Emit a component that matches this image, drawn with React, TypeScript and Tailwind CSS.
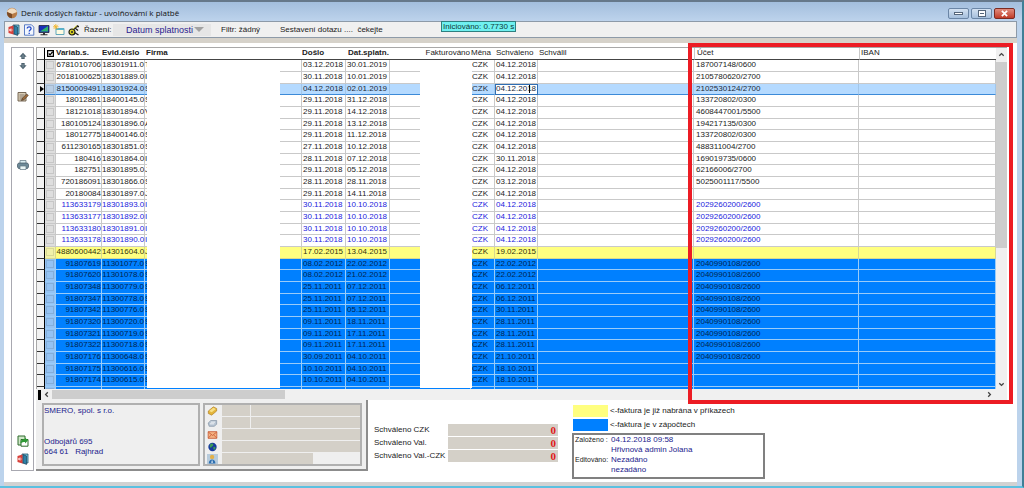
import type { ReactNode } from "react";

type Kind = "plain" | "selected" | "link" | "yellow" | "blue";
type Row = [string, string, string, string, string, string, string, Kind];

const rows: Row[] = [
  ["6781010706", "18301911.0", "T", "03.12.2018", "30.01.2019", "04.12.2018", "187007148/0600", "plain"],
  ["2018100625", "18301889.0", "I", "30.11.2018", "10.01.2019", "04.12.2018", "2105780620/2700", "plain"],
  ["8150009491", "18301924.0", "S", "04.12.2018", "02.01.2019", "04.12.2018", "2102530124/2700", "selected"],
  ["18012861", "18400145.0", "S", "29.11.2018", "31.12.2018", "04.12.2018", "133720802/0300", "plain"],
  ["18121018", "18301894.0", "V", "29.11.2018", "14.12.2018", "04.12.2018", "4608447001/5500", "plain"],
  ["180105124", "18301896.0", "A", "29.11.2018", "13.12.2018", "04.12.2018", "194217135/0300", "plain"],
  ["18012775", "18400146.0", "S", "29.11.2018", "11.12.2018", "04.12.2018", "133720802/0300", "plain"],
  ["611230165", "18301851.0", "S", "27.11.2018", "10.12.2018", "04.12.2018", "488311004/2700", "plain"],
  ["180416", "18301864.0", "I", "28.11.2018", "07.12.2018", "30.11.2018", "169019735/0600", "plain"],
  ["182751", "18301895.0", "J", "29.11.2018", "05.12.2018", "04.12.2018", "62166006/2700", "plain"],
  ["720186091", "18301866.0", "S", "28.11.2018", "28.11.2018", "03.12.2018", "5025001117/5500", "plain"],
  ["20180084", "18301897.0", "J", "29.11.2018", "14.11.2018", "04.12.2018", "", "plain"],
  ["113633179", "18301893.0", "I", "30.11.2018", "10.10.2018", "04.12.2018", "2029260200/2600", "link"],
  ["113633177", "18301892.0", "I", "30.11.2018", "10.10.2018", "04.12.2018", "2029260200/2600", "link"],
  ["113633180", "18301891.0", "I", "30.11.2018", "10.10.2018", "04.12.2018", "2029260200/2600", "link"],
  ["113633178", "18301890.0", "I", "30.11.2018", "10.10.2018", "04.12.2018", "2029260200/2600", "link"],
  ["4880600442", "14301604.0", "J", "17.02.2015", "13.04.2015", "19.02.2015", "", "yellow"],
  ["91807619", "11301077.0", "S", "08.02.2012", "22.02.2012", "22.02.2012", "2040990108/2600", "blue"],
  ["91807620", "11301078.0", "S", "08.02.2012", "21.02.2012", "22.02.2012", "2040990108/2600", "blue"],
  ["91807348", "11300779.0", "S", "25.11.2011", "07.12.2011", "06.12.2011", "2040990108/2600", "blue"],
  ["91807347", "11300778.0", "S", "25.11.2011", "07.12.2011", "06.12.2011", "2040990108/2600", "blue"],
  ["91807342", "11300776.0", "S", "25.11.2011", "05.12.2011", "30.11.2011", "2040990108/2600", "blue"],
  ["91807320", "11300720.0", "S", "09.11.2011", "18.11.2011", "28.11.2011", "2040990108/2600", "blue"],
  ["91807321", "11300719.0", "S", "09.11.2011", "17.11.2011", "28.11.2011", "2040990108/2600", "blue"],
  ["91807322", "11300718.0", "S", "09.11.2011", "17.11.2011", "28.11.2011", "2040990108/2600", "blue"],
  ["91807176", "11300648.0", "S", "30.09.2011", "04.10.2011", "21.10.2011", "2040990108/2600", "blue"],
  ["91807175", "11300616.0", "S", "10.10.2011", "04.10.2011", "18.10.2011", "", "blue"],
  ["91807174", "11300615.0", "S", "10.10.2011", "04.10.2011", "18.10.2011", "", "blue"],
];

const tone: Record<Kind, string> = {
  plain: "bg-white text-[#222] *:border-[#c9c9c9]",
  link: "bg-white text-[#2222dd] *:border-[#c9c9c9]",
  selected: "bg-[#b5daff] text-[#1a2a3a] *:border-r-[#a3c6e8] *:border-b-[#3c8ad8]",
  yellow: "bg-[#ffff80] text-[#333310] *:border-[#d8d890]",
  blue: "bg-[#0080ff] text-[#002550] *:border-[#9accf8]",
};

const checkTone: Record<Kind, string> = {
  plain: "bg-[#dedede]",
  link: "bg-[#dedede]",
  selected: "bg-[#b9cfe6]",
  yellow: "bg-[#f1f1a8]",
  blue: "bg-[#94c2f2]",
};

const Svg = ({ children, className = "size-[12px]" }: { children: ReactNode; className?: string }) => (
  <svg viewBox="0 0 12 12" className={`block shrink-0 ${className}`} aria-hidden="true">
    {children}
  </svg>
);

const DoorIcon = () => (
  <Svg>
    <path d="M5 1h6v9H5z" fill="#6fc3dc" stroke="#23506b" strokeWidth="0.8" />
    <path d="M6 1.5 9.500 3v8.500L6 10z" fill="#2d7fa6" stroke="#17384d" strokeWidth="0.6" />
    <path d="M.500 3 5.500 1.500v9L.500 9z" fill="#d8403a" />
    <path d="M1.500 6h3M3 4.500 1.500 6 3 7.500" stroke="#fff" strokeWidth="0.9" fill="none" />
  </Svg>
);

const HelpIcon = () => (
  <Svg>
    <path d="M1.5.8h7l2.3 2.3v8.1H1.5z" fill="#f2f7ff" stroke="#4a6fc0" strokeWidth="0.9" />
    <path d="M4.2 4.6c0-2.3 3.9-2.2 3.9 0C8.100 6 6.200 6 6.200 7.500M6.200 8.700v1.200" stroke="#2348c8" strokeWidth="1.300" fill="none" />
  </Svg>
);

const MonitorIcon = () => (
  <Svg>
    <path d="M1 1.500h10v7H1z" fill="#1a2fb8" stroke="#20243c" strokeWidth="0.800" />
    <path d="M2 7.500 10 2v5.500z" fill="#2fb36b" />
    <path d="M5 9h2v1.200h2.500v1H2.500v-1H5z" fill="#333" />
  </Svg>
);

const NewIcon = () => (
  <Svg>
    <path d="M3 4.500h8v6H3z" fill="#fffbe2" stroke="#4f9fb6" strokeWidth="0.900" />
    <path d="M3 4.500h8V6H3z" fill="#58b5cf" />
    <path d="M2.800 0v5.600M0 2.800h5.600M.8.800l4 4M4.800.800l-4 4" stroke="#f0b62c" strokeWidth="0.900" />
  </Svg>
);

const KeyIcon = () => (
  <Svg>
    <circle cx="4" cy="8" r="3" fill="#d8d020" stroke="#1c1c10" strokeWidth="1.200" />
    <circle cx="4" cy="8" r="1" fill="#222" />
    <path d="M5 6 10 1.500M7 4l3 2.500M8.500 2.500H11M6.500 8.500l4 2.500" stroke="#222" strokeWidth="1.300" />
    <path d="M5 5 9 1.500" stroke="#e4da30" strokeWidth="0.900" />
  </Svg>
);

const AppIcon = () => (
  <Svg>
    <circle cx="6" cy="6" r="5.200" fill="#b77b46" />
    <path d="M1 5c2-5 8-5 10 0L6 7z" fill="#f1dcc0" />
    <path d="M6 7v4.200C2.500 11 1 8.500 1 5z" fill="#7a4a26" />
  </Svg>
);

const EditIcon = () => (
  <Svg>
    <path d="M1 1.500h8v8.500H1z" fill="#d9cdb6" stroke="#6b5b48" strokeWidth="0.900" />
    <path d="M2.500 4h5M2.500 6h4M2.500 8h3" stroke="#76685a" strokeWidth="0.800" />
    <path d="m4.500 9.500 1-2.500L9.800 3l1.500 1.500L7 8.700z" fill="#a06d3c" stroke="#3b2c20" strokeWidth="0.600" />
  </Svg>
);

const PrinterIcon = () => (
  <Svg>
    <path d="M3 1.500h6v3H3z" fill="#dbeef2" stroke="#5d7380" strokeWidth="0.700" />
    <path d="M1.500 4h9l1 1.500V8l-1 1.500h-9l-1-1.500V5.500z" fill="#6d8a98" stroke="#3f5561" strokeWidth="0.700" />
    <path d="M3 7h6v3.500H3z" fill="#e9f5f5" stroke="#5d7380" strokeWidth="0.700" />
  </Svg>
);

const ExportIcon = () => (
  <Svg>
    <path d="M1 1h7v9H1z" fill="#cfe8c8" stroke="#2e6a2c" strokeWidth="1" />
    <path d="M4 4.500h7v6.700H4z" fill="#fff" stroke="#2e6a2c" strokeWidth="1" />
    <path d="M3.500 8.500c0-3.500 2-4.500 4.500-4.500V2.500l3 3L8 8.500V7c-1.500 0-3 .2-4.500 1.500z" fill="#2f9a35" />
  </Svg>
);

const RailArrow = ({ down = false }: { down?: boolean }) => (
  <Svg className={down ? "size-[8px] rotate-180" : "size-[8px]"}>
    <path d="M6 1 11.500 7H8.500v3.500h-5V7H.500z" fill="#4e6370" />
    <path d="M6 4v5" stroke="#9db2bd" strokeWidth="1" />
  </Svg>
);

const PhoneIcon = () => (
  <Svg className="w-[11px] h-[10px]">
    <path d="M1 6 7 1l4 2v3L5 11 1 9z" fill="#e3b53a" stroke="#a8761a" strokeWidth="0.700" />
    <path d="m2 6 5-4 3 1.500L5 7.500z" fill="#f8df86" />
  </Svg>
);

const FaxIcon = () => (
  <Svg className="w-[11px] h-[10px]">
    <path d="M.8 6 4 3h7v4.500L8 10H2z" fill="#b7c4d2" stroke="#74879a" strokeWidth="0.700" />
    <path d="M4 5h5M3 7h5" stroke="#fff" strokeWidth="0.900" />
  </Svg>
);

const MailIcon = () => (
  <Svg className="w-[11px] h-[10px]">
    <path d="M.8 2h10.400v8H.8z" fill="#f4b183" stroke="#c2512a" strokeWidth="0.900" />
    <path d="m1 2.500 5 4 5-4M1 9.500 4.500 6M11 9.500 7.500 6" stroke="#c2512a" strokeWidth="0.900" fill="none" />
  </Svg>
);

const GlobeIcon = () => (
  <Svg className="w-[11px] h-[10px]">
    <circle cx="6" cy="6" r="5" fill="#173a9e" />
    <path d="M3 3c2-2 4-1 4 .5S5 5 4.500 6.500 2 6 3 3zM7 6c2-1 3 .5 2.500 2S7 9.500 7 8z" fill="#3c9a58" />
  </Svg>
);

const PersonIcon = () => (
  <Svg className="w-[11px] h-[10px] bg-[#b7cbdc]">
    <circle cx="5.500" cy="3.500" r="2.600" fill="#e2b04a" />
    <path d="M1.500 11.500c0-6.500 8-6.500 8 0z" fill="#2d6fb0" />
    <path d="m5.500 7 1 3.500h-2z" fill="#fff" />
  </Svg>
);

const Chevron = ({ className }: { className: string }) => (
  <svg viewBox="0 0 8 8" className={`size-[7px] ${className}`} aria-hidden="true">
    <path d="M1.500 5.500 4 3l2.500 2.500" stroke="#444" strokeWidth="1.500" fill="none" />
  </svg>
);

const InvoiceRow = ({ row }: { row: Row }) => {
  const [variab, evid, firma, doslo, splatn, schvaleno, ucet, kind] = row;
  const selected = kind === "selected";

  return (
    <tr className={`h-[12px] nth-[3n]:h-[11px] *:border-b *:border-r *:align-top *:whitespace-nowrap ${tone[kind]}`}>
      <td className="bg-[#f2f2f2] border-r-black! border-b-[#333]!">
        {selected && (
          <svg viewBox="0 0 4 6" className="mt-[2px] ml-auto h-[6px] w-[4px]" aria-hidden="true">
            <path d="M0 0l4 3-4 3z" fill="#000" />
          </svg>
        )}
      </td>
      <td className={checkTone[kind]}>
        <input type="checkbox" aria-label={variab} className="mx-auto mt-px block size-[8px] appearance-none border border-black/10" />
      </td>
      <td className="text-right">{variab}</td>
      <td className="text-right">{evid}</td>
      <td>{firma}</td>
      <td className="pl-px">{doslo}</td>
      <td className="pl-px">{splatn}</td>
      <td></td>
      <td className="pl-px">CZK</td>
      <td className={selected ? "relative bg-white outline -outline-offset-1 outline-[#2f6fb4]" : "pl-px"}>
        {selected ? (
          <>
            <input aria-label="Schváleno" defaultValue={schvaleno} className="block h-[10px] w-full bg-transparent pl-px outline-none" />
            <span className="absolute top-px left-[34px] h-[8px] w-px bg-black"></span>
          </>
        ) : (
          schvaleno
        )}
      </td>
      <td></td>
      <td className="pl-[2px]">{ucet}</td>
      <td></td>
    </tr>
  );
};

const contacts = [
  { icon: <PhoneIcon />, label: "Telefon", split: true },
  { icon: <FaxIcon />, label: "Fax", split: true },
  { icon: <MailIcon />, label: "E-mail", split: false },
  { icon: <GlobeIcon />, label: "Web", split: false },
  { icon: <PersonIcon />, label: "Kontakt", split: false },
];

const App = () => {
  return (
    <div className="relative flex flex-col border-t-2 border-b-2 border-r-2 border-t-[#66788a] border-r-[#3f7f96] border-b-[#5cc0e0] bg-[#bcd3ec] pl-1 pr-[5px] font-['Liberation_Sans',sans-serif] text-[8px] leading-[10px] text-[#222]">
      {/* Title bar */}
      <header className="-ml-1 -mr-[5px] flex h-[19px] items-center bg-linear-to-b from-[#a3bedd] to-[#bdd3ec] pl-[6px] pr-[7px] pt-[3px]">
        <AppIcon />
        <h1 className="ml-[3px] flex-1 font-['Open_Sans',sans-serif] text-[8px] text-[#111]">Deník došlých faktur - uvolňovámí k platbě</h1>
        <div className="flex gap-[2px]">
          <button aria-label="Minimalizovat" className="flex h-[11px] w-[21px] items-center justify-center rounded-[2px] border border-[#6b86a6] bg-linear-to-b from-[#d3e1f1] to-[#a5bfdc]">
            <span className="h-[3px] w-[9px] border border-[#55667a] bg-white"></span>
          </button>
          <button aria-label="Maximalizovat" className="flex h-[11px] w-[21px] items-center justify-center rounded-[2px] border border-[#6b86a6] bg-linear-to-b from-[#d3e1f1] to-[#a5bfdc]">
            <span className="flex h-[7px] w-[8px] items-center justify-center border border-[#55667a] bg-white">
              <span className="h-px w-[4px] bg-[#55667a]"></span>
            </span>
          </button>
          <button aria-label="Zavřít" className="flex h-[11px] w-[21px] items-center justify-center rounded-[2px] border border-[#7c2b22] bg-linear-to-b from-[#e08a7c] to-[#c03a26]">
            <svg viewBox="0 0 8 8" className="size-[7px]" aria-hidden="true">
              <path d="m1 1 6 6M7 1 1 7" stroke="#fff" strokeWidth="2" />
            </svg>
          </button>
        </div>
      </header>

      {/* Toolbar */}
      <div className="flex h-[17px] items-center border border-[#8d9aa8] bg-[#f0f0f0] pl-[3px]">
        <div className="flex gap-[3px]">
          <button aria-label="Konec"><DoorIcon /></button>
          <button aria-label="Nápověda"><HelpIcon /></button>
          <button aria-label="Obrazovka"><MonitorIcon /></button>
          <button aria-label="Nový"><NewIcon /></button>
          <button aria-label="Klíč"><KeyIcon /></button>
        </div>
        <label htmlFor="sort" className="ml-1 w-[29px]">Řazení:</label>
        <div className="relative h-[12px] w-[98px] bg-[#e6e6e6] text-[#2a1a90]">
          <select id="sort" className="block h-full w-full appearance-none pl-[13px] text-[9px] leading-[12px]">
            <option>Datum splatnosti</option>
          </select>
          <svg viewBox="0 0 10 5" className="pointer-events-none absolute top-[3px] right-[7px] h-[5px] w-[10px]" aria-hidden="true">
            <path d="M0 0h10L5 5z" fill="#a2a2a2" />
          </svg>
        </div>
        <span className="ml-[10px] w-[59px]">Filtr: žádný</span>
        <span>Sestavení dotazu .... &nbsp;čekejte</span>
      </div>
      <div className="absolute top-[19px] left-[441px] border border-[#2f8080] bg-[#6ff0f0] px-px leading-[9px] text-[#103838]">Iniciováno: 0.7730 s</div>

      <div className="h-[5px] bg-[#d6d2ca]"></div>

      <main className="flex border-b-4 border-[#d2d2d2] bg-white pt-1 pr-[10px] pb-[3px] pl-[7px]">
        {/* Left rail */}
        <nav className="mr-[2px] mb-2 flex w-[23px] shrink-0 flex-col items-center border border-[#a8a8b0] pt-1 pb-[5px]">
          <button aria-label="Předchozí"><RailArrow /></button>
          <button aria-label="Další" className="mt-[2px]"><RailArrow down /></button>
          <button aria-label="Upravit" className="mt-[21px]"><EditIcon /></button>
          <button aria-label="Tisk" className="mt-[56px]"><PrinterIcon /></button>
          <button aria-label="Export" className="mt-auto"><ExportIcon /></button>
          <button aria-label="Zavřít okno" className="mt-[6px]"><DoorIcon /></button>
        </nav>

        <div className="min-w-0 flex-1">
          {/* Invoice grid */}
          <div className="flex border-t border-l border-[#a8a8a8]">
            <div className="relative h-[341px] min-w-0 flex-1 overflow-hidden">
              <table className="w-full table-fixed border-separate border-spacing-0">
                <colgroup>
                  <col className="w-[8px]" />
                  <col className="w-[11px]" />
                  <col className="w-[46px]" />
                  <col className="w-[43px]" />
                  <col className="w-[157px]" />
                  <col className="w-[44px]" />
                  <col className="w-[44px]" />
                  <col className="w-[81px]" />
                  <col className="w-[24px]" />
                  <col className="w-[43px]" />
                  <col className="w-[156px]" />
                  <col className="w-[165px]" />
                  <col />
                </colgroup>
                <thead>
                  <tr className="h-[12px] text-left *:border-b *:border-b-[#444] *:align-top *:font-normal *:whitespace-nowrap">
                    <th className="border-r border-r-black"></th>
                    <th>
                      <svg viewBox="0 0 8 8" className="mt-[2px] ml-[2px] size-[7px]" aria-hidden="true">
                        <path d="M.7.700h6.600v6.600H.7z" fill="#fff" stroke="#000" strokeWidth="1.400" />
                        <path d="m2 4 1.500 1.500L6.500 2" stroke="#000" strokeWidth="1.400" fill="none" />
                      </svg>
                    </th>
                    <th className="font-bold!">Variab.s.</th>
                    <th className="font-bold!">Evid.číslo</th>
                    <th className="pl-px font-bold!">Firma</th>
                    <th className="font-bold!">Došlo</th>
                    <th className="pl-[2px] font-bold!">Dat.splatn.</th>
                    <th className="pr-px text-right">Fakturováno</th>
                    <th>Měna</th>
                    <th className="pl-px">Schváleno</th>
                    <th className="pl-px">Schválil</th>
                    <th className="border-l border-l-[#c9c9c9] pl-[2px]">Účet</th>
                    <th className="border-l border-l-[#c9c9c9] pl-px">IBAN</th>
                  </tr>
                </thead>
                <tbody>
                  {rows.map((row) => (
                    <InvoiceRow key={row[0]} row={row} />
                  ))}
                  <InvoiceRow row={["91807173", "11300614.0", "S", "10.10.2011", "04.10.2011", "18.10.2011", "", "blue"]} />
                </tbody>
              </table>
              {/* blanked-out columns */}
              <div className="absolute top-[12px] bottom-px left-[110px] w-[133px] bg-white"></div>
              <div className="absolute top-[12px] bottom-px left-[383px] w-[52px] bg-white"></div>
            </div>
            {/* vertical scrollbar */}
            <div className="flex w-[11px] flex-col items-center bg-[#f0f0f0]">
              <Chevron className="mt-[3px]" />
              <div className="mt-1 h-[186px] w-full bg-[#cdcdcd]"></div>
              <Chevron className="mt-auto mb-px rotate-180" />
            </div>
          </div>
          {/* horizontal scrollbar */}
          <div className="flex h-[11px] items-center bg-[#f0f0f0] pl-[2px]">
            <span className="h-[10px] w-[3px] bg-black"></span>
            <Chevron className="ml-[2px] -rotate-90" />
            <div className="ml-[2px] h-[9px] w-[233px] bg-[#cdcdcd]"></div>
            <Chevron className="mr-[14px] ml-auto rotate-90" />
          </div>

          {/* Footer */}
          <div className="flex items-start">
            <div className="flex h-[71px] gap-[3px] border-r-2 border-b-2 border-[#8c8c8c] bg-[#efefef] pt-[3px] pr-1 pb-[3px] pl-[6px]">
              <address className="w-[158px] border-2 border-[#b0b0b0] pt-px text-[#22228c] not-italic">
                <p>SMERO, spol. s r.o.</p>
                <p className="mt-[21px]">Odbojářů 695</p>
                <p>664 61&nbsp;&nbsp; Rajhrad</p>
              </address>
              <div className="flex w-[159px] flex-col justify-center gap-[2px] border-2 border-[#b0b0b0] pl-[2px]">
                {contacts.map((c) => (
                  <div key={c.label} className="flex h-[10px] items-center">
                    {c.icon}
                    <div className={`ml-1 flex h-[11px] gap-px ${c.label === "Kontakt" ? "w-[91px]" : "w-[138px]"}`}>
                      {c.split && <input aria-label={`${c.label} předvolba`} className="w-[28px] bg-[#d4d0c8]" />}
                      <input aria-label={c.label} className="min-w-0 flex-1 bg-[#d4d0c8]" />
                    </div>
                  </div>
                ))}
              </div>
            </div>

            <div className="mt-6 ml-[6px] flex flex-col gap-px">
              {["Schváleno CZK", "Schváleno Val.", "Schváleno Val.-CZK"].map((label, i) => (
                <div key={label} className="flex h-[12px] items-center">
                  <label htmlFor={`sum${i}`} className="w-[74px] whitespace-nowrap">{label}</label>
                  <input
                    id={`sum${i}`}
                    readOnly
                    value="0"
                    className="h-[12px] w-[110px] bg-[#d4d0c8] pr-[2px] text-right font-['Liberation_Serif',serif] text-[11px] font-bold text-[#e01818]"
                  />
                </div>
              ))}
            </div>

            <div className="ml-[14px] pt-[5px]">
              <div className="ml-px flex items-center gap-[2px]">
                <span className="h-[12px] w-[35px] bg-[#ffff80]"></span>
                <span>&lt;-faktura je již nabrána v příkazech</span>
              </div>
              <div className="mt-[2px] ml-px flex items-center gap-[2px]">
                <span className="h-[12px] w-[35px] bg-[#0080ff]"></span>
                <span>&lt;-faktura je v zápočtech</span>
              </div>
              <dl className="mt-[2px] grid w-[193px] grid-cols-[36px_1fr] border-2 border-[#808080] pl-px pb-[2px] text-[#22228c]">
                <dt className="text-[7px] text-[#222]">Založeno :</dt>
                <dd>04.12.2018 09:58</dd>
                <dd className="col-start-2">Hřivnová admin Jolana</dd>
                <dt className="text-[7px] text-[#222]">Editováno:</dt>
                <dd>Nezadáno</dd>
                <dd className="col-start-2">nezadáno</dd>
              </dl>
            </div>
          </div>
        </div>
      </main>

      {/* account columns highlight */}
      <div className="pointer-events-none absolute top-[41px] right-[9px] left-[688px] h-[361px] border-4 border-[#ec1c24]"></div>
    </div>
  );
};

export default App;
